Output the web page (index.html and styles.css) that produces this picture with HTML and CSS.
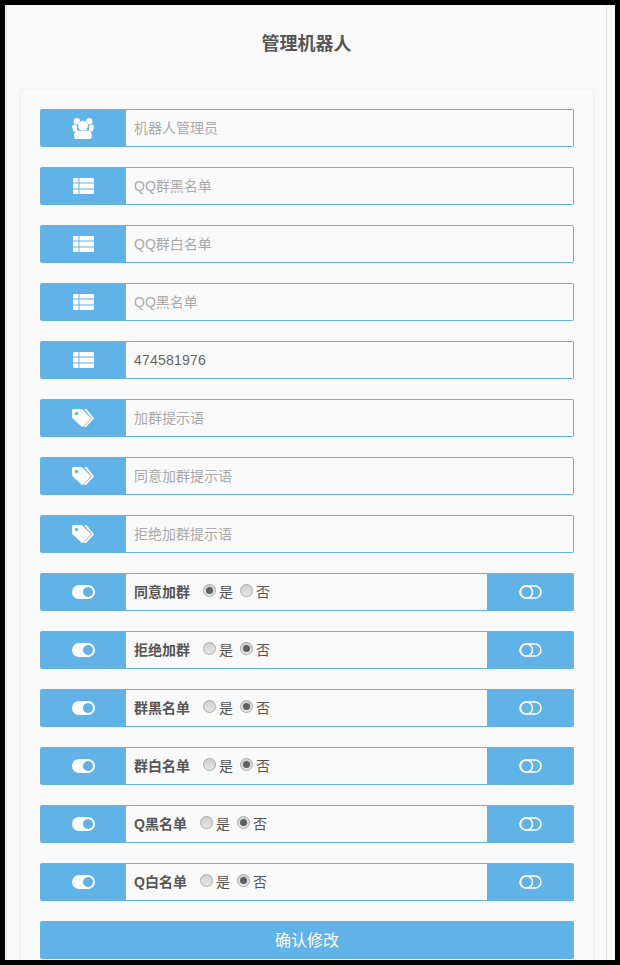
FILE: index.html
```html
<!DOCTYPE html><html><head><meta charset='utf-8'/>
<title>管理机器人</title>
<link rel="stylesheet" href="styles.css">
</head>
<body>
<svg class="defs" width="0" height="0">
	<symbol id="i-users" viewBox="0 0 22 21">
		<circle cx="4.800" cy="3.200" r="3.200"/><circle cx="17.200" cy="3.200" r="3.200"/>
		<circle cx="2.500" cy="9" r="2.500"/><circle cx="19.500" cy="9" r="2.500"/>
		<path d="M1 10h4v3.500H2q-1 0-1-1zM21 10h-4v3.500h3q1 0 1-1z"/>
		<circle cx="11" cy="7.800" r="5.200" stroke="#61b2e6" stroke-width=".5"/>
		<path d="M7 12.200q4 1.800 8 0 4.800 .6 4.800 5v2.100q0 1.700-1.700 1.700H3.900q-1.700 0-1.700-1.700v-2.100q0-4.400 4.800-5z"/>
	</symbol>
	<symbol id="i-list" viewBox="0 0 21 16">
		<path d="M0 1q0-1 1-1h4.500v4.600H0zM6.500 0H20q1 0 1 1v3.600H6.500zM0 5.600h5.500v4.800H0zM6.500 5.600H21v4.800H6.500zM0 11.400h5.500V16H1q-1 0-1-1zM6.500 11.400H21V15q0 1-1 1H6.500z"/>
	</symbol>
	<symbol id="i-tags" viewBox="0 0 22 19">
		<path fill-rule="evenodd" d="M1.500 0H9q1 0 1.700.7l7.600 7.800q.8 1 0 1.800l-7 7.100q-1 .9-1.900 0L1 9.700Q0 8.800 0 7.700V1.500Q0 0 1.500 0zM4.500 2.800a1.700 1.700 0 1 0 .01 0z"/>
		<path d="M12 0h1.500q1 0 1.700.7l6.200 7.800q.8 1 0 1.800l-7 7.100q-1.200 1-2.500.2l7.200-7.300q1-1 0-2z"/>
	</symbol>
	<symbol id="i-on" viewBox="0 0 23 14">
		<path fill-rule="evenodd" d="M7 0h9a7 7 0 0 1 0 14H7A7 7 0 0 1 7 0zM16 2a5 5 0 1 0 .01 0z"/>
	</symbol>
	<symbol id="i-off" viewBox="0 0 23 14">
		<rect x="1" y="1" width="21" height="12" rx="6" fill="none" stroke="#fff" stroke-width="1.600"/>
		<circle cx="7.500" cy="7" r="6" fill="none" stroke="#fff" stroke-width="1.600"/>
	</symbol>
</svg>

<div class="page">
	<h1 class="title">管理机器人</h1>
	<form class="panel">
		<div class="row">
			<span class="addon"><svg class="ico ico-users"><use href="#i-users"/></svg></span>
			<input class="field" type="text" placeholder="机器人管理员">
		</div>
		<div class="row">
			<span class="addon"><svg class="ico ico-list"><use href="#i-list"/></svg></span>
			<input class="field" type="text" placeholder="QQ群黑名单">
		</div>
		<div class="row">
			<span class="addon"><svg class="ico ico-list"><use href="#i-list"/></svg></span>
			<input class="field" type="text" placeholder="QQ群白名单">
		</div>
		<div class="row">
			<span class="addon"><svg class="ico ico-list"><use href="#i-list"/></svg></span>
			<input class="field" type="text" placeholder="QQ黑名单">
		</div>
		<div class="row">
			<span class="addon"><svg class="ico ico-list"><use href="#i-list"/></svg></span>
			<input class="field" type="text" value="474581976">
		</div>
		<div class="row">
			<span class="addon"><svg class="ico ico-tags"><use href="#i-tags"/></svg></span>
			<input class="field" type="text" placeholder="加群提示语">
		</div>
		<div class="row">
			<span class="addon"><svg class="ico ico-tags"><use href="#i-tags"/></svg></span>
			<input class="field" type="text" placeholder="同意加群提示语">
		</div>
		<div class="row">
			<span class="addon"><svg class="ico ico-tags"><use href="#i-tags"/></svg></span>
			<input class="field" type="text" placeholder="拒绝加群提示语">
		</div>

		<div class="row">
			<span class="addon"><svg class="ico ico-toggle"><use href="#i-on"/></svg></span>
			<div class="choice">
				<b class="name">同意加群</b>
				<input class="radio" type="radio" name="r1" checked><span class="opt">是</span>
				<input class="radio" type="radio" name="r1"><span class="opt">否</span>
			</div>
			<span class="addon addon-end"><svg class="ico ico-toggle"><use href="#i-off"/></svg></span>
		</div>
		<div class="row">
			<span class="addon"><svg class="ico ico-toggle"><use href="#i-on"/></svg></span>
			<div class="choice">
				<b class="name">拒绝加群</b>
				<input class="radio" type="radio" name="r2"><span class="opt">是</span>
				<input class="radio" type="radio" name="r2" checked><span class="opt">否</span>
			</div>
			<span class="addon addon-end"><svg class="ico ico-toggle"><use href="#i-off"/></svg></span>
		</div>
		<div class="row">
			<span class="addon"><svg class="ico ico-toggle"><use href="#i-on"/></svg></span>
			<div class="choice">
				<b class="name">群黑名单</b>
				<input class="radio" type="radio" name="r3"><span class="opt">是</span>
				<input class="radio" type="radio" name="r3" checked><span class="opt">否</span>
			</div>
			<span class="addon addon-end"><svg class="ico ico-toggle"><use href="#i-off"/></svg></span>
		</div>
		<div class="row">
			<span class="addon"><svg class="ico ico-toggle"><use href="#i-on"/></svg></span>
			<div class="choice">
				<b class="name">群白名单</b>
				<input class="radio" type="radio" name="r4"><span class="opt">是</span>
				<input class="radio" type="radio" name="r4" checked><span class="opt">否</span>
			</div>
			<span class="addon addon-end"><svg class="ico ico-toggle"><use href="#i-off"/></svg></span>
		</div>
		<div class="row">
			<span class="addon"><svg class="ico ico-toggle"><use href="#i-on"/></svg></span>
			<div class="choice">
				<b class="name">Q黑名单</b>
				<input class="radio" type="radio" name="r5"><span class="opt">是</span>
				<input class="radio" type="radio" name="r5" checked><span class="opt">否</span>
			</div>
			<span class="addon addon-end"><svg class="ico ico-toggle"><use href="#i-off"/></svg></span>
		</div>
		<div class="row">
			<span class="addon"><svg class="ico ico-toggle"><use href="#i-on"/></svg></span>
			<div class="choice">
				<b class="name">Q白名单</b>
				<input class="radio" type="radio" name="r6"><span class="opt">是</span>
				<input class="radio" type="radio" name="r6" checked><span class="opt">否</span>
			</div>
			<span class="addon addon-end"><svg class="ico ico-toggle"><use href="#i-off"/></svg></span>
		</div>

		<button class="submit" type="button">确认修改</button>
	</form>
</div>
</body>
</html>
```

FILE: styles.css
```css
html {
	height: 100%;
	overflow: hidden;
}
body {
	margin: 0;
	height: 965px;
	box-sizing: border-box;
	overflow: hidden;
	border: 5px solid #000;
	background-color: #fafafa;
	font-family: "Liberation Sans", "Noto Sans CJK SC", sans-serif;
	color: #555;
}
.defs {
	position: absolute;
}
.page {
	width: 601px;
	height: 100%;
	box-sizing: border-box;
	margin-left: 1px;
	border-left: 1px solid #e2e2e2;
	border-right: 1px solid #e2e2e2;
}
.title {
	margin: 0;
	padding-top: 27px;
	height: 56px;
	line-height: 24px;
	font-size: 18px;
	font-weight: bold;
	text-align: center;
	color: #555;
}
.panel {
	width: 576px;
	box-sizing: border-box;
	height: 900px;
	margin-left: 12px;
	padding: 19px 19px;
	border: 2px solid #f4f4f4;
	border-radius: 4px;
}
.row {
	display: flex;
	height: 38px;
	margin-bottom: 20px;
}
.addon {
	flex: none;
	display: flex;
	align-items: center;
	justify-content: center;
	width: 86px;
	background-color: #61b2e6;
	border-radius: 2px 0 0 2px;
}
.addon-end {
	width: 87px;
	border-radius: 0 2px 2px 0;
}
.ico {
	display: block;
	fill: #fff;
}
.ico-users {
	width: 22px;
	height: 21px;
}
.ico-list {
	width: 21px;
	height: 16px;
}
.ico-tags {
	width: 22px;
	height: 19px;
}
.ico-toggle {
	width: 23px;
	height: 14px;
}
.field {
	flex: 1;
	min-width: 0;
	box-sizing: border-box;
	height: 38px;
	margin: 0;
	padding: 0 8px;
	border: 1px solid #61b2e6;
	border-left: 0;
	border-radius: 0 2px 2px 0;
	outline: none;
	background-color: #fafafa;
	font: 14px "Liberation Sans", "Noto Sans CJK SC", sans-serif;
	letter-spacing: .2px;
	color: #666;
}
.field::placeholder {
	color: #aaa;
	letter-spacing: 0;
}
.choice {
	flex: 1;
	display: flex;
	align-items: center;
	box-sizing: border-box;
	padding: 0 0 2px 8px;
	border-top: 1px solid #61b2e6;
	border-bottom: 1px solid #61b2e6;
	background-color: #fafafa;
	font-size: 14px;
}
.name {
	margin-right: 13px;
	font-size: 14px;
	color: #555;
}
.radio {
	appearance: none;
	flex: none;
	position: relative;
	width: 13px;
	height: 13px;
	margin: 0 3px 2px 0;
	border: 1px solid #aaa;
	border-radius: 50%;
	background: linear-gradient(#d0d0d0, #e6e6e6);
}
.radio:checked::after {
	content: "";
	position: absolute;
	left: 2px;
	top: 2px;
	width: 7px;
	height: 7px;
	border-radius: 50%;
	background-color: #5f5f5f;
}
.opt {
	margin-right: 7px;
	color: #555;
}
.submit {
	display: block;
	width: 100%;
	height: 38px;
	padding: 0 0 2px;
	border: 0;
	border-radius: 2px;
	background-color: #61b2e6;
	font: 16px "Liberation Sans", "Noto Sans CJK SC", sans-serif;
	color: #fff;
}
```
